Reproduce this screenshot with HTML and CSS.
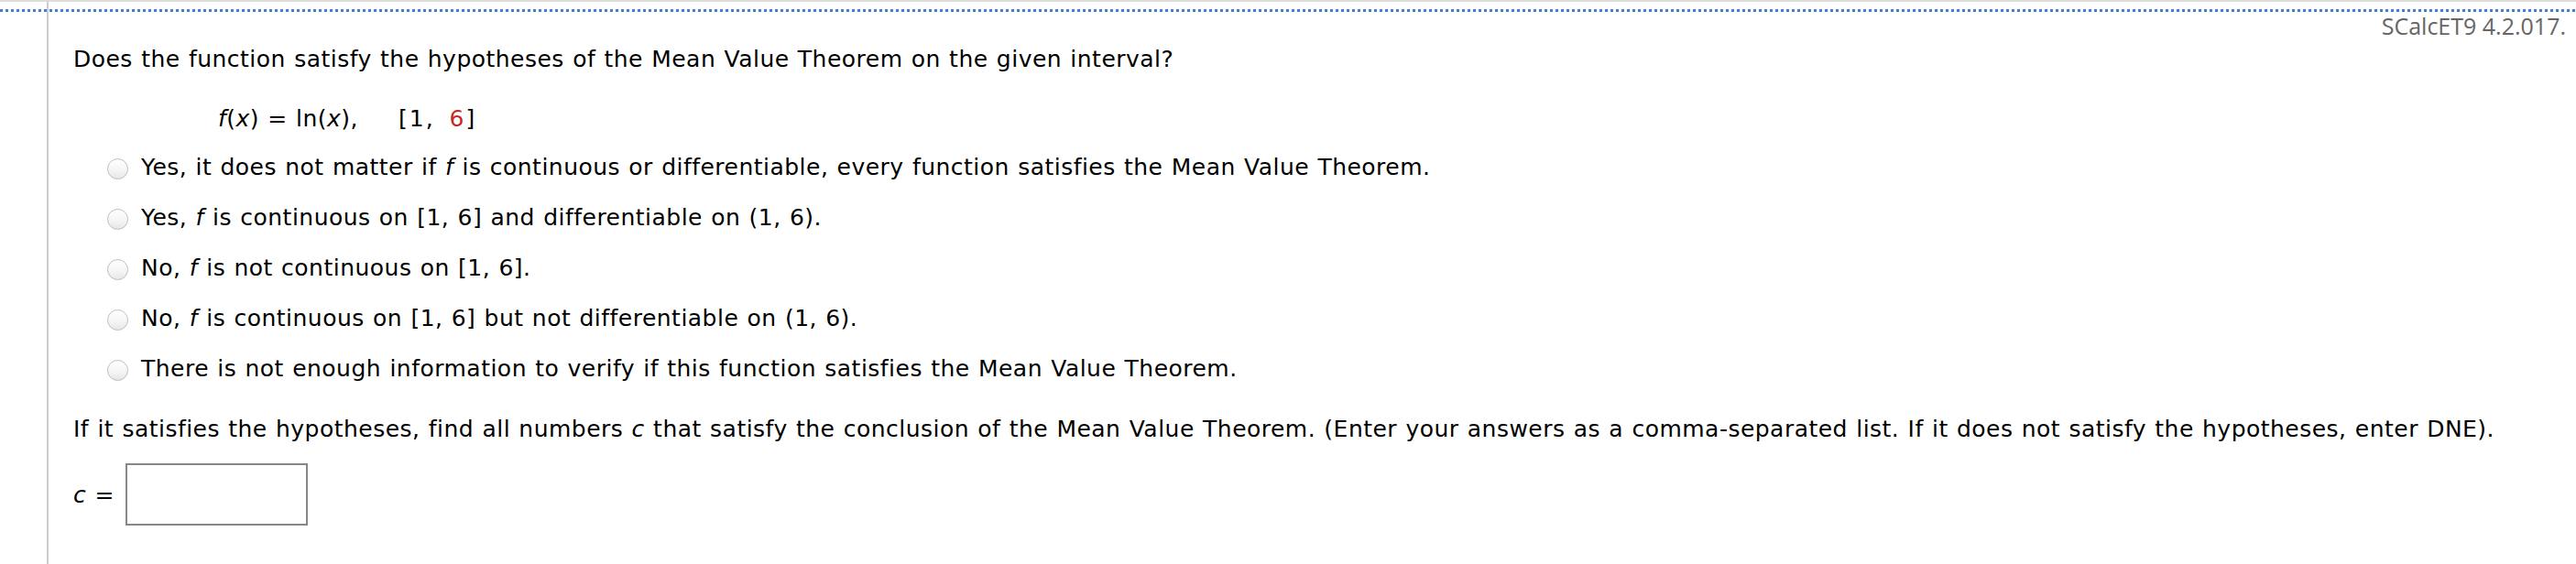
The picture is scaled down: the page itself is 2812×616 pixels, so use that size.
FILE: index.html
```html
<!DOCTYPE html>
<html lang="en">
<head>
<meta charset="utf-8">
<title>Mean Value Theorem</title>
<link rel="stylesheet" href="styles.css">
</head>
<body>
<div class="topstrip"></div>
<div class="page">
  <div class="gutter"></div>
  <main class="content">
    <div class="ref">SCalcET9 4.2.017.</div>
    <p class="question">Does the function satisfy the hypotheses of the Mean Value Theorem on the given interval?</p>
    <p class="formula"><i>f</i>(<i>x</i>) = ln(<i>x</i>),<span class="interval">[1, <span class="red">6</span>]</span></p>
    <ul class="options">
      <li class="option"><input type="radio" name="mvt" class="radio"><span>Yes, it does not matter if <i>f</i> is continuous or differentiable, every function satisfies the Mean Value Theorem.</span></li>
      <li class="option"><input type="radio" name="mvt" class="radio"><span>Yes, <i>f</i> is continuous on [1, 6] and differentiable on (1, 6).</span></li>
      <li class="option"><input type="radio" name="mvt" class="radio"><span>No, <i>f</i> is not continuous on [1, 6].</span></li>
      <li class="option"><input type="radio" name="mvt" class="radio"><span>No, <i>f</i> is continuous on [1, 6] but not differentiable on (1, 6).</span></li>
      <li class="option"><input type="radio" name="mvt" class="radio"><span>There is not enough information to verify if this function satisfies the Mean Value Theorem.</span></li>
    </ul>
    <p class="prompt">If it satisfies the hypotheses, find all numbers <i>c</i> that satisfy the conclusion of the Mean Value Theorem. (Enter your answers as a comma-separated list. If it does not satisfy the hypotheses, enter DNE).</p>
    <div class="answer">
      <label class="answer-label" for="c"><i>c</i> =</label>
      <input type="text" id="c" class="answer-box">
    </div>
  </main>
</div>
</body>
</html>
```
FILE: styles.css
```css
html, body {
  margin: 0;
  padding: 0;
  background: #fff;
}

body {
  font-family: "DejaVu Sans", Verdana, sans-serif;
  font-size: 25px;
  line-height: 30px;
  letter-spacing: 0.48px;
  word-spacing: 0.85px;
  color: #000;
}

.topstrip {
  height: 2px;
  background: #dcdcdc;
}

.page {
  display: flex;
  min-height: 614px;
  background-image: repeating-linear-gradient(to right, #3d7edb 0 3px, transparent 3px 6px);
  background-size: 100% 3px;
  background-position: 0 8px;
  background-repeat: no-repeat;
}

.gutter {
  width: 51px;
  flex: none;
}

.content {
  flex: 1;
  border-left: 2px solid #cccccc;
  padding: 13px 11px 0 27px;
}

.ref {
  font-family: "Open Sans", "Liberation Sans", sans-serif;
  font-size: 25px;
  line-height: 27px;
  letter-spacing: 0;
  word-spacing: 0;
  color: #666;
  text-align: right;
}

.question {
  margin: 8px 0 0;
}

.formula {
  margin: 35px 0 0 158px;
}

.interval {
  margin-left: 44px;
  letter-spacing: 2px;
  word-spacing: 6px;
}

.red {
  color: #c8281c;
}

.options {
  list-style: none;
  margin: 23px 0 0 37px;
  padding: 0;
  display: flex;
  flex-direction: column;
  gap: 25px;
}

.option {
  display: flex;
  align-items: center;
  gap: 14px;
}

.radio {
  appearance: none;
  -webkit-appearance: none;
  margin: 3px 0 0;
  width: 23px;
  height: 23px;
  flex: none;
  border-radius: 50%;
  border: 1px solid #bdbdbd;
  background: linear-gradient(to bottom, #ffffff 0%, #f4f4f4 60%, #e6e6e6 100%);
  box-shadow: inset 0 1px 1px rgba(255,255,255,0.9);
}

.prompt {
  margin: 36px 0 0;
}

.answer {
  display: flex;
  align-items: center;
  gap: 12px;
  margin-top: 22px;
}

.answer-label {
  padding-top: 2px;
}

.answer-box {
  width: 199px;
  height: 68px;
  box-sizing: border-box;
  border: 2px solid #878787;
  margin: 0;
  padding: 0 6px;
  font: inherit;
  background: #fff;
}
```
